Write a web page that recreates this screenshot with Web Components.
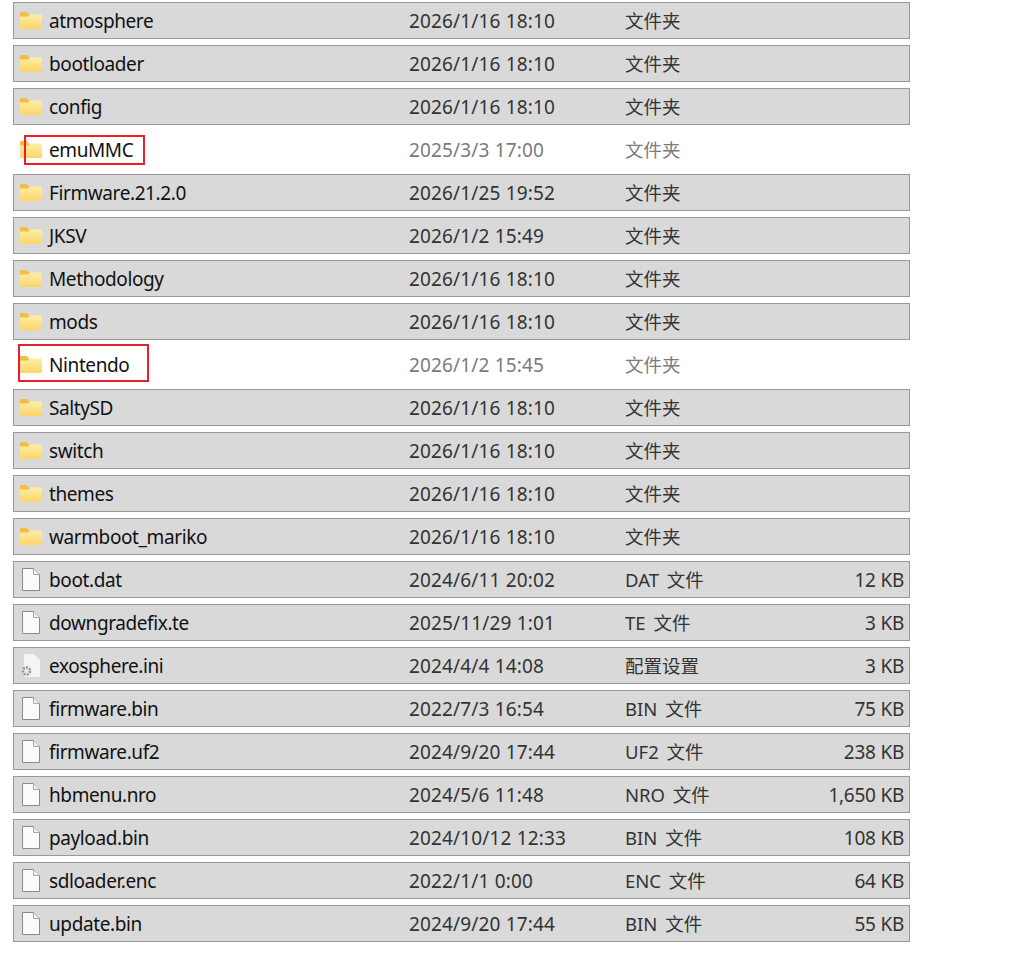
<!DOCTYPE html>
<html>
<head>
<meta charset="utf-8">
<title>files</title>
<style>
  html, body { margin: 0; background: #fff; }
  body { font-family: "Noto Sans", "Noto Sans CJK SC", sans-serif; }
</style>
</head>
<body>
<file-list id="list"></file-list>
<script>
// icon: folder / blank page / ini settings page
const icons = {
  folder: `<svg width="22" height="17" viewBox="0 0 22 17">
    <defs><linearGradient id="f" x1="0" y1="0" x2="0" y2="1"><stop offset="0" stop-color="#ffeea6"/><stop offset="1" stop-color="#fdd468"/></linearGradient></defs>
    <path d="M0 1.5C0 .6.6 0 1.5 0H6.5l2.5 2.5V5H0z" fill="#f3bd45"/>
    <path d="M0 4.5L8.5 4.5 10.5 2.5H20.5C21.4 2.5 22 3.1 22 4V15.5C22 16.4 21.4 17 20.5 17H1.5C.6 17 0 16.4 0 15.5z" fill="url(#f)"/>
  </svg>`,
  file: `<svg width="18" height="23" viewBox="0 0 18 23">
    <path d="M.5.5H11.5L17.5 6.5V22.5H.5z" fill="#fbfbfb" stroke="#8a8a8a"/>
    <path d="M11.5.5V6.5H17.5" fill="#f0f0f0" stroke="#a8a8a8"/>
  </svg>`,
  ini: `<svg width="18" height="23" viewBox="0 0 18 23">
    <path d="M2 0H12L18 6V23H2z" fill="#f4f4f4"/>
    <circle cx="4.5" cy="17" r="3.6" fill="#e6e8ea" stroke="#8b9298" stroke-width="2.4" stroke-dasharray="2 1.2"/>
  </svg>`
};

const rowTemplate = document.createElement('template');
rowTemplate.innerHTML = `
  <style>
    :host {
      display: grid;
      grid-template-columns: 30px 360px 216px 1fr auto;
      align-items: center;
      height: 37px;
      box-sizing: border-box;
      padding: 0 5px;
      border: 1px solid #999;
      background: #d9d9d9;
      color: #111;
      font-size: 19px;
      position: relative;
    }
    :host([plain]) {
      background: #fff;
      border-color: #fff;
    }
    :host([plain]) .date, :host([plain]) .type { color: #7b7b7b; }
    .icon { display: flex; align-items: center; padding-left: 1px; }
    .icon svg { display: block; }
    .icon.page { padding-left: 3px; }
    .name, .date, .type, .size { white-space: nowrap; }
    .name { letter-spacing: -0.4px; }
    .date { color: #333; letter-spacing: 0.15px; }
    .type { color: #333; font-size: 18.5px; word-spacing: 3px; margin-top: -2px; }
    .size { color: #333; text-align: right; letter-spacing: -0.25px; }
    .mark {
      position: absolute;
      border: 2px solid #e8202a;
      box-sizing: border-box;
      display: none;
    }
  </style>
  <div class="icon"></div>
  <div class="name"></div>
  <div class="date"></div>
  <div class="type"></div>
  <div class="size"></div>
  <div class="mark"></div>
`;

class FileRow extends HTMLElement {
  constructor() {
    super();
    this.attachShadow({ mode: 'open' });
    this.shadowRoot.appendChild(rowTemplate.content.cloneNode(true));
  }
  set data(d) {
    const s = this.shadowRoot;
    const icon = s.querySelector('.icon');
    icon.innerHTML = icons[d.icon];
    if (d.icon !== 'folder') icon.classList.add('page');
    s.querySelector('.name').textContent = d.name;
    s.querySelector('.date').textContent = d.date;
    s.querySelector('.type').textContent = d.type;
    s.querySelector('.size').textContent = d.size || '';
    if (d.plain) this.setAttribute('plain', '');
    if (d.mark) {
      const m = s.querySelector('.mark');
      m.style.display = 'block';
      m.style.left = d.mark[0] + 'px';
      m.style.top = d.mark[1] + 'px';
      m.style.width = d.mark[2] + 'px';
      m.style.height = d.mark[3] + 'px';
    }
  }
}
customElements.define('file-row', FileRow);

const listTemplate = document.createElement('template');
listTemplate.innerHTML = `
  <style>
    :host {
      display: flex;
      flex-direction: column;
      gap: 6px;
      width: 897px;
      margin-left: 13px;
      padding-top: 2px;
    }
  </style>
  <slot></slot>
`;

class FileList extends HTMLElement {
  constructor() {
    super();
    this.attachShadow({ mode: 'open' });
    this.shadowRoot.appendChild(listTemplate.content.cloneNode(true));
  }
  set items(list) {
    list.forEach(d => {
      const row = document.createElement('file-row');
      this.appendChild(row);
      row.data = d;
    });
  }
}
customElements.define('file-list', FileList);

const folder = '文件夹';
document.getElementById('list').items = [
  { icon: 'folder', name: 'atmosphere', date: '2026/1/16 18:10', type: folder },
  { icon: 'folder', name: 'bootloader', date: '2026/1/16 18:10', type: folder },
  { icon: 'folder', name: 'config', date: '2026/1/16 18:10', type: folder },
  { icon: 'folder', name: 'emuMMC', date: '2025/3/3 17:00', type: folder, plain: true, mark: [10, 3, 121, 30] },
  { icon: 'folder', name: 'Firmware.21.2.0', date: '2026/1/25 19:52', type: folder },
  { icon: 'folder', name: 'JKSV', date: '2026/1/2 15:49', type: folder },
  { icon: 'folder', name: 'Methodology', date: '2026/1/16 18:10', type: folder },
  { icon: 'folder', name: 'mods', date: '2026/1/16 18:10', type: folder },
  { icon: 'folder', name: 'Nintendo', date: '2026/1/2 15:45', type: folder, plain: true, mark: [4, -3, 131, 38] },
  { icon: 'folder', name: 'SaltySD', date: '2026/1/16 18:10', type: folder },
  { icon: 'folder', name: 'switch', date: '2026/1/16 18:10', type: folder },
  { icon: 'folder', name: 'themes', date: '2026/1/16 18:10', type: folder },
  { icon: 'folder', name: 'warmboot_mariko', date: '2026/1/16 18:10', type: folder },
  { icon: 'file', name: 'boot.dat', date: '2024/6/11 20:02', type: 'DAT 文件', size: '12 KB' },
  { icon: 'file', name: 'downgradefix.te', date: '2025/11/29 1:01', type: 'TE 文件', size: '3 KB' },
  { icon: 'ini', name: 'exosphere.ini', date: '2024/4/4 14:08', type: '配置设置', size: '3 KB' },
  { icon: 'file', name: 'firmware.bin', date: '2022/7/3 16:54', type: 'BIN 文件', size: '75 KB' },
  { icon: 'file', name: 'firmware.uf2', date: '2024/9/20 17:44', type: 'UF2 文件', size: '238 KB' },
  { icon: 'file', name: 'hbmenu.nro', date: '2024/5/6 11:48', type: 'NRO 文件', size: '1,650 KB' },
  { icon: 'file', name: 'payload.bin', date: '2024/10/12 12:33', type: 'BIN 文件', size: '108 KB' },
  { icon: 'file', name: 'sdloader.enc', date: '2022/1/1 0:00', type: 'ENC 文件', size: '64 KB' },
  { icon: 'file', name: 'update.bin', date: '2024/9/20 17:44', type: 'BIN 文件', size: '55 KB' }
];
</script>
</body>
</html>
